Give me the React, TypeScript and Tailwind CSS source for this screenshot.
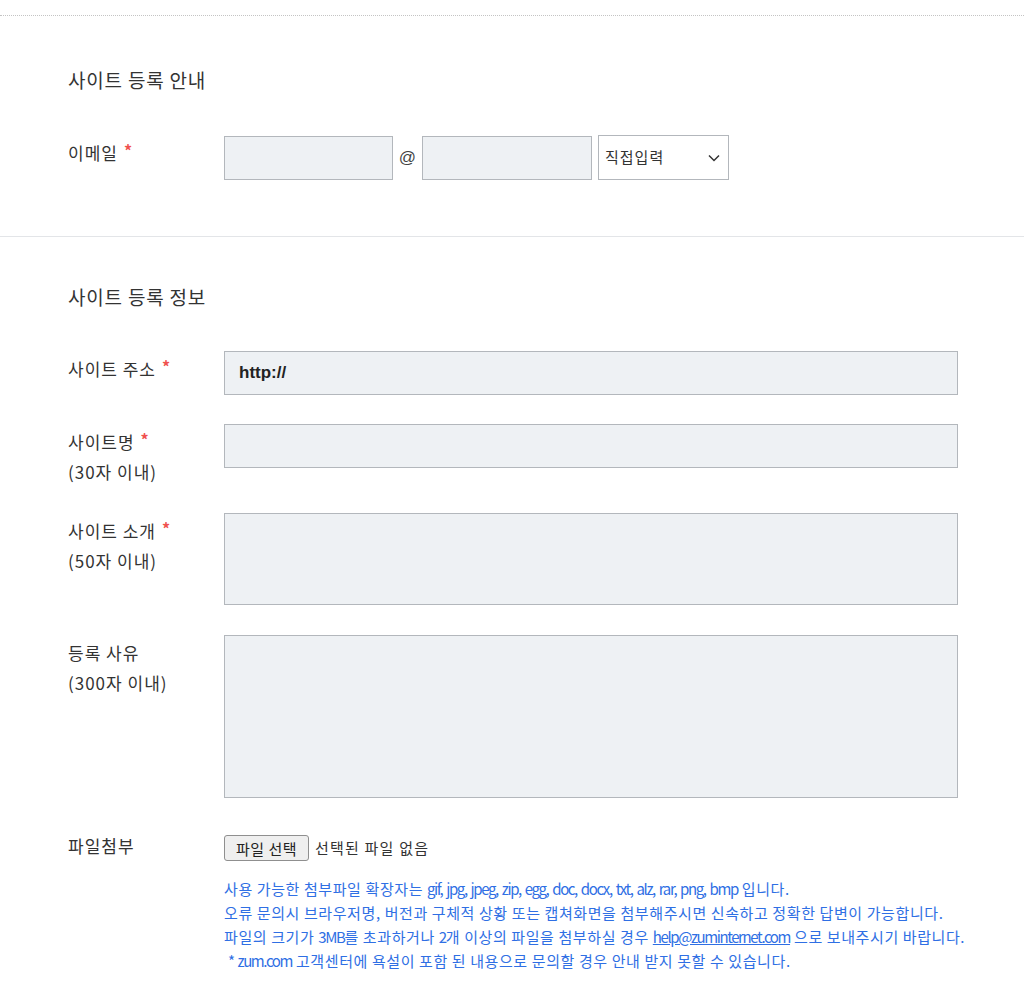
const kr = { fontFamily: '"Noto Sans CJK KR", "Noto Sans", sans-serif' }

function Req() {
  return <span className="ml-[6px] text-[#f0524f] text-[16px] font-bold leading-[24px] align-top">*</span>
}

function Label({ title, sub, req }: { title: string; sub?: string; req?: boolean }) {
  return (
    <div className="w-[156px] shrink-0 pt-[3px] text-[17px] leading-[30px] tracking-[1px] text-[#333]">
      <div>
        {title}
        {req && <Req />}
      </div>
      {sub && <div>{sub}</div>}
    </div>
  )
}

const field = "border border-[#b3b7bc] bg-[#eef1f4]"

function Lat({ children }: { children: React.ReactNode }) {
  return <span className="tracking-[-1.4px] [word-spacing:2px]">{children}</span>
}

export default function App() {
  return (
    <div className="bg-white pt-[15px] text-[#333]" style={kr}>
      <div className="border-t border-dotted border-[#c4c4c4]" />

      <section className="pl-[68px] pr-[66px] pt-[51px] pb-[56px]">
        <h2 className="text-[19px] leading-[26px] tracking-[0.8px]">사이트 등록 안내</h2>
        <div className="mt-[42px] flex">
          <Label title="이메일" req />
          <div className="flex items-center">
            <div className={`${field} w-[169px] h-[44px]`} />
            <span
              className="w-[29px] text-center text-[17px] text-[#444]"
              style={{ fontFamily: '"Liberation Sans", Arial, sans-serif' }}
            >
              @
            </span>
            <div className={`${field} w-[170px] h-[44px]`} />
            <div className="ml-[6px] w-[131px] h-[45px] border border-[#b3b7bc] bg-white flex items-center justify-between pl-[6px] pr-[8px]">
              <span className="text-[15px] tracking-[1px]">직접입력</span>
              <svg width="12" height="8" viewBox="0 0 12 8" fill="none" stroke="#333" strokeWidth="1.5">
                <path d="M1 1.5l5 5 5-5" />
              </svg>
            </div>
          </div>
        </div>
      </section>

      <div className="border-t border-[#e3e5e8]" />

      <section className="pl-[68px] pr-[66px] pt-[47px] pb-[20px]">
        <h2 className="text-[19px] leading-[26px] tracking-[0.8px]">사이트 등록 정보</h2>

        <div className="mt-[41px] flex">
          <Label title="사이트 주소" req />
          <div
            className={`${field} flex-1 h-[44px] flex items-center pl-[14px] text-[17px] font-bold text-[#222]`}
            style={{ fontFamily: '"Liberation Sans", Arial, sans-serif' }}
          >
            http://
          </div>
        </div>

        <div className="mt-[29px] flex">
          <Label title="사이트명" sub="(30자 이내)" req />
          <div className={`${field} flex-1 h-[44px]`} />
        </div>

        <div className="mt-[26px] flex">
          <Label title="사이트 소개" sub="(50자 이내)" req />
          <div className={`${field} flex-1 h-[92px]`} />
        </div>

        <div className="mt-[30px] flex">
          <Label title="등록 사유" sub="(300자 이내)" />
          <div className={`${field} flex-1 h-[163px]`} />
        </div>

        <div className="mt-[33px] flex">
          <div className="w-[156px] shrink-0 text-[17px] leading-[30px] tracking-[1px]">파일첨부</div>
          <div className="flex-1 pt-[4px]">
            <div className="flex items-center">
              <button className="h-[26px] px-[11px] border border-[#8f8f8f] rounded-[3px] bg-[#efefef] text-[15px] leading-none tracking-[0.5px] text-[#222]">
                파일 선택
              </button>
              <span className="ml-[6px] text-[15px] tracking-[1.2px]">선택된 파일 없음</span>
            </div>
            <div className="mt-[16px] text-[15px] leading-[24px] text-[#2f6fe4] tracking-[0.6px] whitespace-nowrap">
              <p>
                사용 가능한 첨부파일 확장자는 <Lat>gif, jpg, jpeg, zip, egg, doc, docx, txt, alz, rar, png, bmp</Lat> 입니다.
              </p>
              <p>오류 문의시 브라우저명, 버전과 구체적 상황 또는 캡쳐화면을 첨부해주시면 신속하고 정확한 답변이 가능합니다.</p>
              <p>
                파일의 크기가 <Lat>3MB</Lat>를 초과하거나 <Lat>2</Lat>개 이상의 파일을 첨부하실 경우{" "}
                <a href="#" className="underline">
                  <Lat>help@zuminternet.com</Lat>
                </a>{" "}
                으로 보내주시기 바랍니다.
              </p>
              <p className="pl-[4px]">
                <Lat>* zum.com</Lat> 고객센터에 욕설이 포함 된 내용으로 문의할 경우 안내 받지 못할 수 있습니다.
              </p>
            </div>
          </div>
        </div>
      </section>
    </div>
  )
}
